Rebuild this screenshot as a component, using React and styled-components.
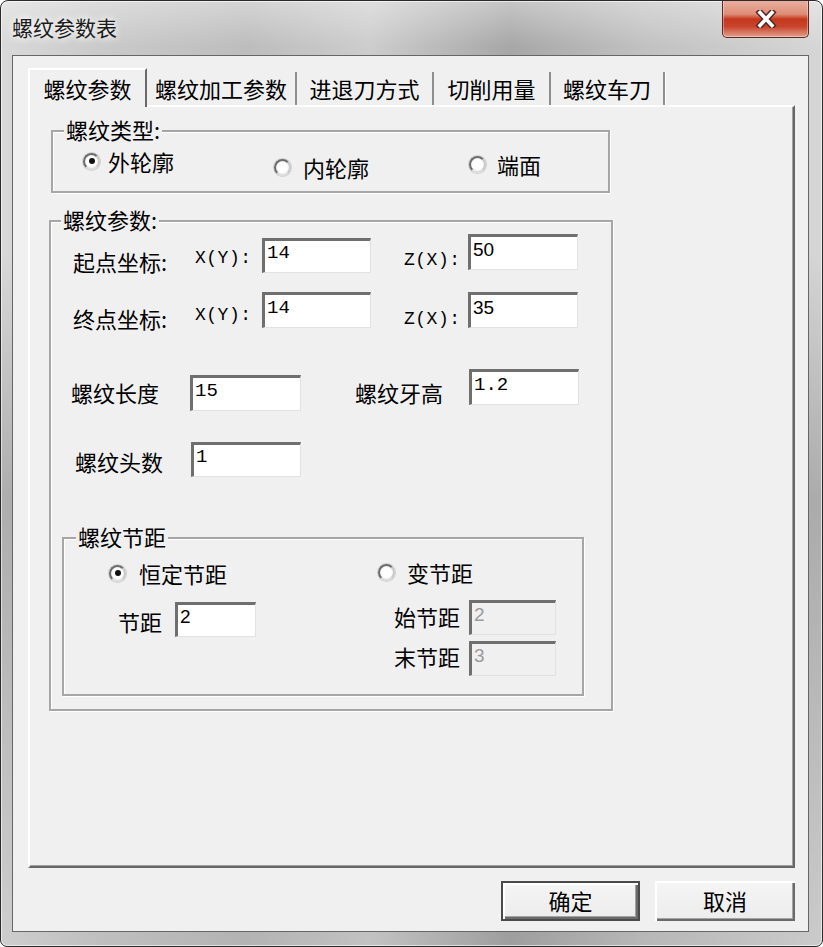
import React from 'react'
import styled, { createGlobalStyle, css } from 'styled-components'

const CJK = `"Noto Sans CJK SC", "Noto Sans", sans-serif`

const GlobalStyle = createGlobalStyle`
  html, body {
    margin: 0;
    padding: 0;
    background: #fff;
  }
  body {
    font-family: ${CJK};
    color: #000;
  }
`

const Window = styled.div`
  box-sizing: border-box;
  width: 823px;
  height: 947px;
  border: 1px solid #2a2a2a;
  border-radius: 8px 8px 7px 7px;
  background:
    linear-gradient(180deg, rgba(255, 255, 255, 0.35) 0px, rgba(255, 255, 255, 0) 45px),
    linear-gradient(180deg, rgba(0, 0, 0, 0) 250px, rgba(0, 0, 0, 0.2) 500px, rgba(0, 0, 0, 0.05) 947px),
    linear-gradient(90deg, #d9d9d9 0%, #cacaca 12%, #bdbdbd 30%, #cdcdcd 45%, #a7a7a7 62%, #c1c1c1 78%, #d6d6d6 100%);
  box-shadow: inset 0 0 0 1px rgba(255, 255, 255, 0.6);
  display: flex;
  flex-direction: column;
  padding: 0 13px 14px 11px;
  overflow: hidden;
`

const TitleBar = styled.div`
  height: 54px;
  flex: none;
  display: flex;
  justify-content: space-between;
  align-items: flex-start;
`

const Title = styled.div`
  margin-top: 12px;
  font-size: 21px;
  line-height: 28px;
  color: #1c1c1c;
  text-shadow: 0 0 6px rgba(255, 255, 255, 0.95), 0 0 10px rgba(255, 255, 255, 0.8);
`

const CloseButton = styled.div`
  box-sizing: border-box;
  width: 87px;
  height: 38px;
  margin-top: -1px;
  border: 1px solid #5b2b22;
  border-top: none;
  border-radius: 0 0 5px 5px;
  background: linear-gradient(180deg, #eab1a2 0%, #de8d78 38%, #c5361c 52%, #c8452c 72%, #e3a08c 100%);
  box-shadow: inset 0 0 0 1px rgba(255, 255, 255, 0.35);
  display: grid;
  place-items: center;
`

const Client = styled.div`
  flex: 1;
  box-sizing: border-box;
  background: #f0f0f0;
  border: 1px solid #666;
  padding: 12px 13px 10px 15px;
  display: flex;
  flex-direction: column;
`

const TabStrip = styled.div`
  height: 37px;
  display: flex;
  align-items: flex-end;
`

const Tab = styled.div`
  box-sizing: border-box;
  width: ${p => p.w}px;
  text-align: center;
  font-size: 22px;
  white-space: nowrap;
  background: #f0f0f0;
  ${p => p.active ? css`
    height: 39px;
    margin-bottom: -2px;
    position: relative;
    z-index: 1;
    line-height: 36px;
    border-left: 2px solid #fff;
    border-top: 2px solid #fff;
    border-right: 2px solid #6a6a6a;
  ` : css`
    height: 33px;
    line-height: 33px;
    border-right: 2px solid #8f8f8f;
    box-shadow: 1px 0 0 #fff;
  `}
`

const Panel = styled.div`
  box-sizing: border-box;
  height: 763px;
  border-left: 2px solid #fff;
  border-top: 2px solid #fff;
  border-right: 2px solid #666;
  border-bottom: 2px solid #666;
  box-shadow: inset -1px -1px 0 #a0a0a0;
  padding: 23px 0 0 21px;
  display: flex;
  flex-direction: column;
  align-items: flex-start;
`

const Group = styled.div`
  position: relative;
  box-sizing: border-box;
  width: ${p => p.w}px;
  height: ${p => p.h}px;
  margin-top: ${p => p.mt || 0}px;
  margin-left: ${p => p.ml || 0}px;
  padding-top: ${p => p.pt || 0}px;
  border: 2px solid #a6a6a6;
  box-shadow: inset 1px 1px 0 #fff, 1px 1px 0 #fff;
`

const Legend = styled.span`
  position: absolute;
  top: -16px;
  left: ${p => p.left}px;
  padding: 0 2px;
  background: #f0f0f0;
  font-size: 22px;
  line-height: 26px;
  white-space: nowrap;
`

const RadioRow = styled.div`
  display: grid;
  grid-template-columns: 191px 195px auto;
  padding-left: 30px;
  align-items: start;
`

const Radio = styled.label`
  display: flex;
  align-items: center;
  gap: ${p => p.gap || 11}px;
  margin-top: ${p => p.mt || 0}px;
  font-size: 22px;
  line-height: 26px;
  white-space: nowrap;
`

const RadioDot = styled.span`
  flex: none;
  box-sizing: border-box;
  width: 17px;
  height: 17px;
  border-radius: 50%;
  border: 2px solid;
  border-color: #6c6c6c #c9c9c9 #dcdcdc #6c6c6c;
  background: radial-gradient(circle, #fff 50%, #e2e2e2 100%);
  box-shadow: 0 0 0 1px rgba(150, 150, 150, 0.35);
  display: grid;
  place-items: center;

  &::after {
    content: '';
    width: 6px;
    height: 6px;
    border-radius: 50%;
    background: ${p => (p.checked ? '#111' : 'transparent')};
  }
`

const Row = styled.div`
  display: grid;
  grid-template-columns: ${p => p.cols};
  align-items: start;
  padding-left: ${p => p.pl}px;
  margin-top: ${p => p.mt || 0}px;
`

const Label = styled.span`
  margin-top: ${p => p.mt || 0}px;
  font-size: 22px;
  line-height: 26px;
  white-space: nowrap;
  text-align: ${p => (p.right ? 'right' : 'left')};
  width: ${p => (p.w ? `${p.w}px` : 'auto')};
`

const Coord = styled.span`
  margin-top: ${p => p.mt || 0}px;
  font-family: "Liberation Mono", monospace;
  font-size: 18px;
  line-height: 26px;
  letter-spacing: 0.5px;
  white-space: nowrap;
`

const Field = styled.input`
  box-sizing: border-box;
  width: ${p => p.w}px;
  height: ${p => p.h || 36}px;
  margin: ${p => p.mt || 0}px 0 0 0;
  padding: 0 0 7px 2px;
  border-top: 3px solid #6f6f6f;
  border-left: 3px solid #6f6f6f;
  border-right: 1px solid #e2e2e2;
  border-bottom: 1px solid #e2e2e2;
  outline: none;
  background: ${p => (p.disabled ? '#f0f0f0' : '#fff')};
  color: ${p => (p.disabled ? '#9a9a9a' : '#000')};
  font-family: ${p => (p.mono ? '"Liberation Mono", monospace' : '"Liberation Sans", sans-serif')};
  font-size: 19px;
  -webkit-text-fill-color: ${p => (p.disabled ? '#9a9a9a' : '#000')};
  opacity: 1;
`

const PitchBody = styled.div`
  display: grid;
  grid-template-columns: 269px auto;
  padding-left: 45px;
  align-items: start;
`

const Column = styled.div`
  display: flex;
  flex-direction: column;
  align-items: flex-start;
`

const Pair = styled.div`
  display: flex;
  align-items: flex-start;
  gap: ${p => p.gap}px;
  margin-top: ${p => p.mt || 0}px;
  margin-left: ${p => p.ml || 0}px;
`

const ButtonRow = styled.div`
  display: flex;
  justify-content: flex-end;
  gap: 15px;
  margin-top: 13px;
`

const Button = styled.button`
  box-sizing: border-box;
  width: ${p => p.w}px;
  height: 40px;
  padding: 0 0 2px;
  font-family: ${CJK};
  font-size: 22px;
  color: #000;
  background: linear-gradient(180deg, #f5f5f5, #ececec);
  border: ${p => (p.primary ? '2px solid #4a4a4a' : 'none')};
  box-shadow: inset 2px 2px 0 #fff, inset -2px -2px 0 #6a6a6a, inset -3px -3px 0 #a3a3a3;
`

function CloseIcon() {
  return (
    <svg width="22" height="18" viewBox="0 0 22 18">
      <path d="M5 2.5 L17 15.5 M17 2.5 L5 15.5" stroke="#4a2a25" strokeWidth="6.5" strokeLinecap="square" />
      <path d="M5 2.5 L17 15.5 M17 2.5 L5 15.5" stroke="#fff" strokeWidth="3.6" strokeLinecap="square" />
    </svg>
  )
}

function RadioOption({ checked, gap, mt, children }) {
  return (
    <Radio gap={gap} mt={mt}>
      <RadioDot checked={checked} />
      {children}
    </Radio>
  )
}

const tabs = [
  { text: '螺纹参数', w: 119, active: true },
  { text: '螺纹加工参数', w: 150 },
  { text: '进退刀方式', w: 137 },
  { text: '切削用量', w: 117 },
  { text: '螺纹车刀', w: 114 },
]

export default function App() {
  return (
    <>
      <GlobalStyle />
      <Window>
        <TitleBar>
          <Title>螺纹参数表</Title>
          <CloseButton>
            <CloseIcon />
          </CloseButton>
        </TitleBar>

        <Client>
          <TabStrip>
            {tabs.map(t => (
              <Tab key={t.text} w={t.w} active={t.active}>{t.text}</Tab>
            ))}
          </TabStrip>

          <Panel>
            <Group w={559} h={63}>
              <Legend left={11}>螺纹类型:</Legend>
              <RadioRow>
                <RadioOption checked gap={8} mt={16}>外轮廓</RadioOption>
                <RadioOption gap={12} mt={22}>内轮廓</RadioOption>
                <RadioOption gap={11} mt={19}>端面</RadioOption>
              </RadioRow>
            </Group>

            <Group w={564} h={491} mt={27} ml={-2} pt={12}>
              <Legend left={10}>螺纹参数:</Legend>

              <Row pl={22} cols="122px 67px 142px 64px 110px">
                <Label mt={14}>起点坐标:</Label>
                <Coord mt={11}>X(Y):</Coord>
                <Field w={109} h={35} mt={4} mono value="14" readOnly />
                <Coord mt={13}>Z(X):</Coord>
                <Field w={110} value="50" readOnly />
              </Row>

              <Row pl={22} mt={18} cols="122px 67px 142px 64px 110px">
                <Label mt={13}>终点坐标:</Label>
                <Coord mt={10}>X(Y):</Coord>
                <Field w={109} mono value="14" readOnly />
                <Coord mt={14}>Z(X):</Coord>
                <Field w={110} value="35" readOnly />
              </Row>

              <Row pl={20} mt={37} cols="119px 165px 114px 110px">
                <Label mt={10}>螺纹长度</Label>
                <Field w={111} mt={6} mono value="15" readOnly />
                <Label mt={10}>螺纹牙高</Label>
                <Field w={110} mono value="1.2" readOnly />
              </Row>

              <Row pl={24} mt={31} cols="116px 110px">
                <Label mt={6}>螺纹头数</Label>
                <Field w={110} h={35} mono value="1" readOnly />
              </Row>

              <Group w={522} h={159} mt={60} ml={11} pt={21}>
                <Legend left={12}>螺纹节距</Legend>
                <PitchBody>
                  <Column>
                    <RadioOption checked gap={13}>恒定节距</RadioOption>
                    <Pair gap={13} mt={16} ml={9}>
                      <Label mt={6}>节距</Label>
                      <Field w={81} h={35} value="2" readOnly />
                    </Pair>
                  </Column>
                  <Column>
                    <RadioOption gap={12} mt={-1}>变节距</RadioOption>
                    <Pair gap={9} mt={15}>
                      <Label mt={3} w={82} right>始节距</Label>
                      <Field w={87} h={35} value="2" disabled />
                    </Pair>
                    <Pair gap={9} mt={6}>
                      <Label mt={2} w={82} right>末节距</Label>
                      <Field w={87} h={35} value="3" disabled />
                    </Pair>
                  </Column>
                </PitchBody>
              </Group>
            </Group>
          </Panel>

          <ButtonRow>
            <Button w={139} primary>确定</Button>
            <Button w={140}>取消</Button>
          </ButtonRow>
        </Client>
      </Window>
    </>
  )
}
